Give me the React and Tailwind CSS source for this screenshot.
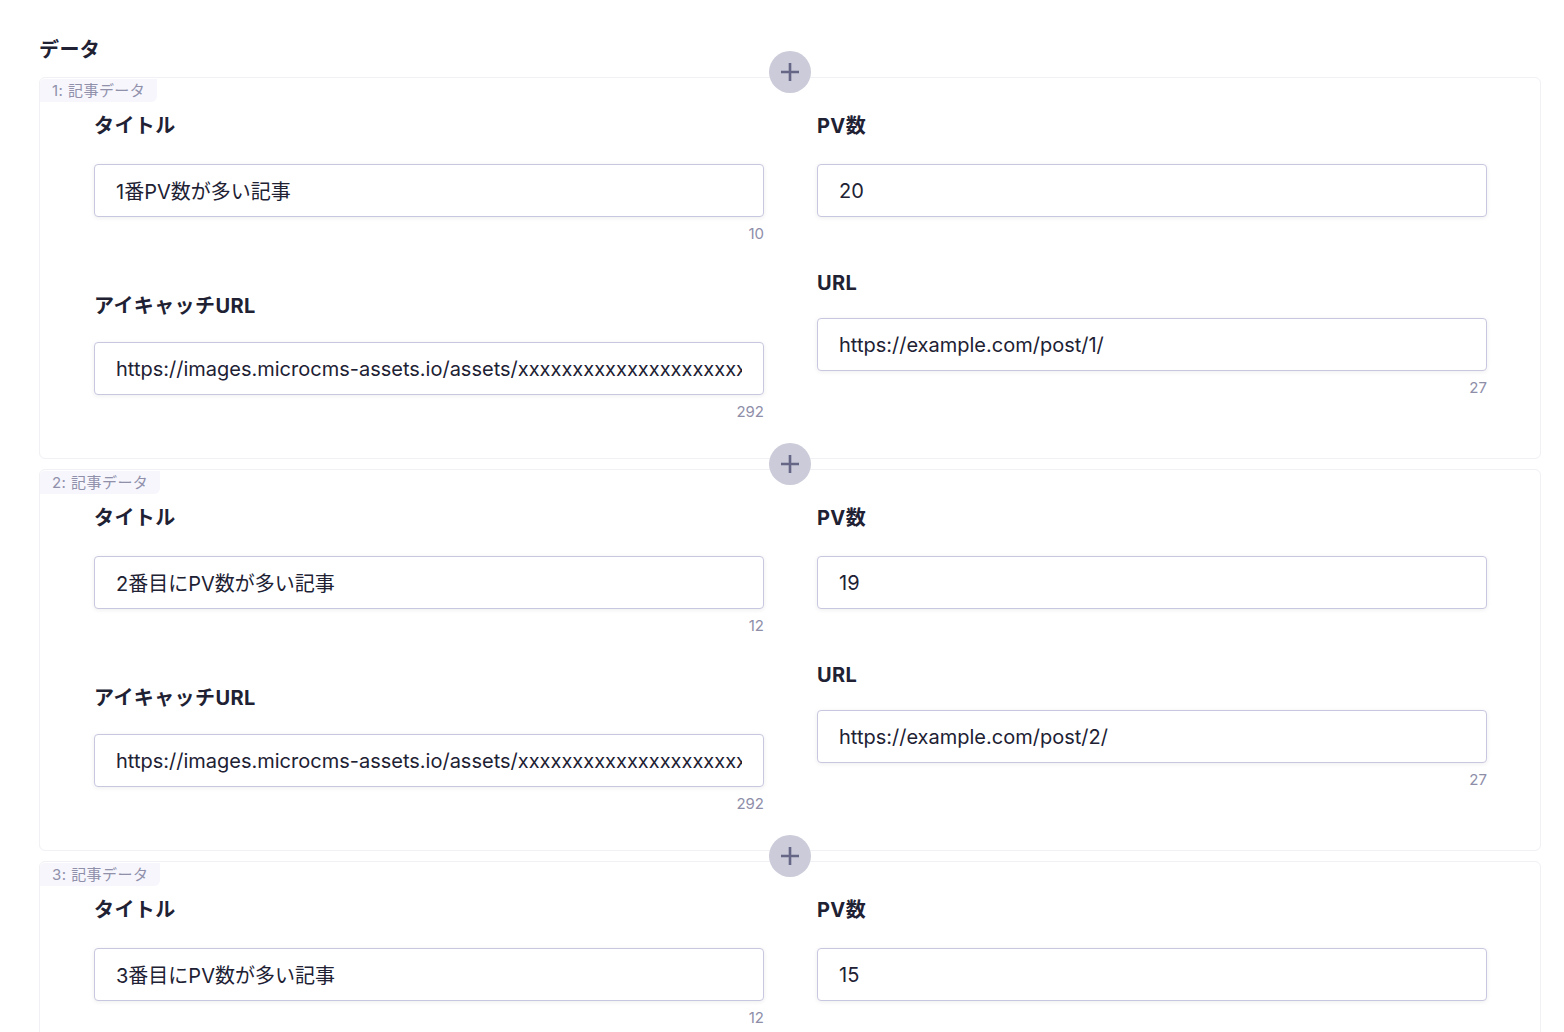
import React from 'react';

const font = { fontFamily: '"Inter", "Noto Sans CJK JP", sans-serif' };

const records = [
    {
        title: '1番PV数が多い記事',
        titleCount: 10,
        pv: '20',
        url: 'https://example.com/post/1/',
    },
    {
        title: '2番目にPV数が多い記事',
        titleCount: 12,
        pv: '19',
        url: 'https://example.com/post/2/',
    },
    {
        title: '3番目にPV数が多い記事',
        titleCount: 12,
        pv: '15',
        url: 'https://example.com/post/3/',
    },
];

const imageUrl = 'https://images.microcms-assets.io/assets/xxxxxxxxxxxxxxxxxxxxxxxxxxxxxxxxxxxxxxxxxxxxxxxxxxx';

const PlusIcon = () => (
    <svg width="20" height="20" viewBox="0 0 20 20" fill="none">
        <path d="M10 1v18M1 10h18" stroke="#666687" strokeWidth="2.6" />
    </svg>
);

// labelGap: space between the field label and its input
const Field = ({ label, value, count, labelGap = 'mb-[23px]' }) => (
    <div className="flex flex-col">
        <label className={`h-[30px] text-[20px] leading-[30px] font-bold text-[#212134] tracking-[0.02em] ${labelGap}`}>{label}</label>
        <input
            readOnly
            value={value}
            className="h-[53px] w-full border border-[#c8c7e0] rounded-[4px] bg-white px-[21px] text-[20px] text-[#212134] outline-none shadow-[0_1px_4px_rgba(33,33,52,0.08)]"
            style={font}
        />
        {count !== undefined && (
            <div className="h-[23px] pt-[10px] text-right text-[15px] leading-[14px] text-[#8e8ea9]">{count}</div>
        )}
    </div>
);

const RecordBlock = ({ index, record }) => (
    <div className="relative w-[1502px] border border-[#f0f0f5] rounded-[6px]">
        <button className="absolute left-1/2 -translate-x-1/2 -top-[27px] w-[42px] h-[42px] rounded-full bg-[#cbcbd9] flex items-center justify-center">
            <PlusIcon />
        </button>
        <div className="inline-block h-[23px] px-[12px] bg-[#f6f6fc] text-[15px] leading-[23px] text-[#9090ab] tracking-[0.03em] rounded-tl-[5px] rounded-br-[6px]">
            {index}: 記事データ
        </div>
        <div className="grid grid-cols-2 gap-x-[53px] pl-[54px] pr-[53px] pt-[9px] pb-[40px]">
            <div className="flex flex-col gap-[51px]">
                <Field label="タイトル" value={record.title} count={record.titleCount} />
                <Field label="アイキャッチURL" value={imageUrl} count={292} labelGap="mb-[21px]" />
            </div>
            <div className="flex flex-col gap-[51px]">
                <Field label="PV数" value={record.pv} />
                <Field label="URL" value={record.url} count={27} labelGap="mb-[20px]" />
            </div>
        </div>
    </div>
);

export default function App() {
    return (
        <div className="min-h-screen bg-white pl-[39px] pt-[38px] pb-[40px]" style={font}>
            <h2 className="text-[20px] leading-[24px] font-bold text-[#212134] tracking-[0.02em] mb-[15px]">データ</h2>
            <div className="flex flex-col gap-[10px]">
                {records.map((record, i) => (
                    <RecordBlock key={i} index={i + 1} record={record} />
                ))}
            </div>
        </div>
    );
}
